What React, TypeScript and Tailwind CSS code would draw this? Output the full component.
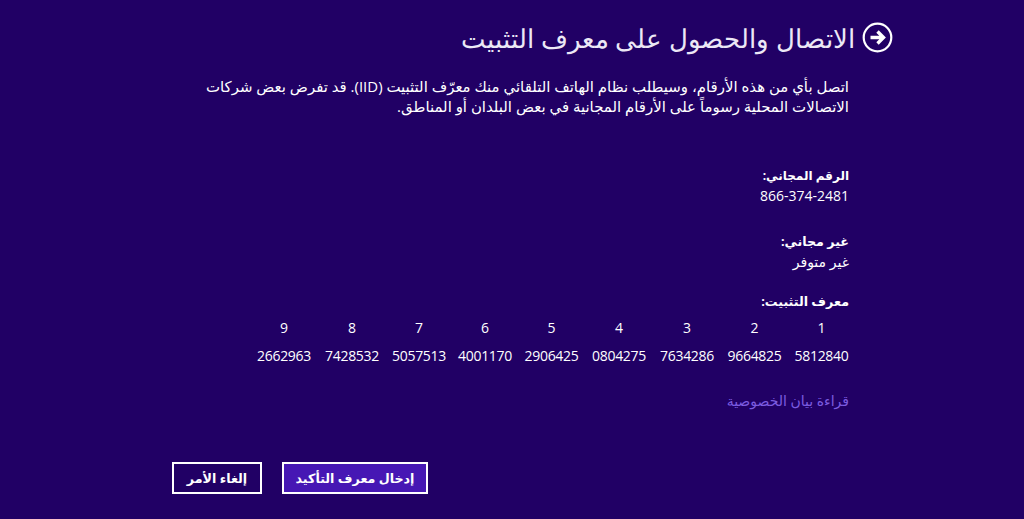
const ids = ["5812840","9664825","7634286","0804275","2906425","4001170","5057513","7428532","2662963"];
const widths = [55, 55, 56, 56, 55, 54, 54, 56, 56];

export default function App() {
  return (
    <div dir="rtl" className="w-[1024px] h-[519px] overflow-hidden bg-[#210065] text-white font-['Open_Sans','DejaVu_Sans',sans-serif] text-[14px] flex flex-col pr-[131px] pl-[172px]">
      <div className="flex items-center gap-[7px] h-[76px] pb-[1px]">
        <svg width="31" height="31" viewBox="0 0 31 31" className="shrink-0">
          <circle cx="15.5" cy="15.5" r="13.8" fill="none" stroke="#fff" strokeWidth="2.2" />
          <path d="M15.5 9.5 L21.5 15.5 L15.5 21.5 M8.5 15.5 H20.5" fill="none" stroke="#fff" strokeWidth="3.4" />
        </svg>
        <h1 className="text-[26px] font-light leading-none text-[#ece8f6]">الاتصال والحصول على معرف التثبيت</h1>
      </div>
      <div className="pr-[44px] flex flex-col flex-1">
        <p className="whitespace-nowrap leading-[20px] text-[14.95px]">
          اتصل بأي من هذه الأرقام، وسيطلب نظام الهاتف التلقائي منك معرّف التثبيت (IID). قد تفرض بعض شركات
          <br />
          الاتصالات المحلية رسوماً على الأرقام المجانية في بعض البلدان أو المناطق.
        </p>
        <div className="mt-[50px] font-bold leading-[20px] text-[12px]">الرقم المجاني:</div>
        <div className="leading-[20px]" dir="ltr"><span className="block text-right">866-374-2481</span></div>
        <div className="mt-[25px] font-bold leading-[20px] text-[12.7px]">غير مجاني:</div>
        <div className="leading-[20px] mt-[1px]">غير متوفر</div>
        <div className="mt-[19px] font-bold leading-[20px] text-[12.7px]">معرف التثبيت:</div>
        <div className="flex gap-[12px] mt-[7px]">
          {ids.map((id, i) => (
            <div key={id} className="flex flex-col items-center" style={{ width: widths[i] }}>
              <div className="leading-[20px]">{i + 1}</div>
              <div className="leading-[20px] mt-[8px] tracking-[-0.3px]">{id}</div>
            </div>
          ))}
        </div>
        <a className="mt-[25px] leading-[20px] text-[#7c5ce0]">قراءة بيان الخصوصية</a>
      </div>
      <div className="flex justify-end gap-[20px] pb-[25px]">
        <button className="w-[146px] h-[32px] border-2 border-white bg-[#4617b4] font-bold text-[12.7px] leading-none">إدخال معرف التأكيد</button>
        <button className="w-[90px] h-[32px] border-2 border-white bg-[#210065] font-bold text-[12.7px] leading-none">إلغاء الأمر</button>
      </div>
    </div>
  );
}
